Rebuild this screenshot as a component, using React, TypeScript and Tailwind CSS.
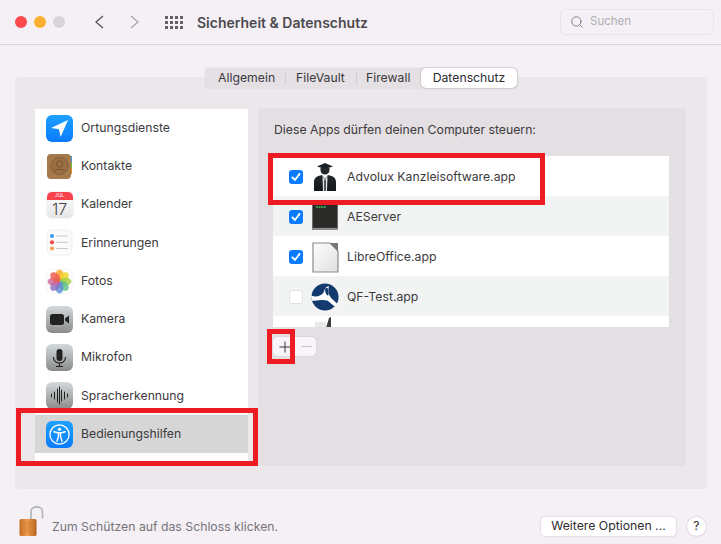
import React from "react";
import { Search } from "lucide-react";

const LocationIcon = () => (
  <svg width="27" height="27" viewBox="0 0 27 27">
    <defs>
      <linearGradient id="locBg" x1="0" y1="0" x2="0" y2="1">
        <stop offset="0" stopColor="#1ea1ff" />
        <stop offset="1" stopColor="#0a7cff" />
      </linearGradient>
    </defs>
    <rect width="27" height="27" rx="6" fill="url(#locBg)" />
    <path d="M22 5 L5 13 L13 14.2 L14.6 22 Z" fill="#fff" />
  </svg>
);

const ContactsIcon = () => (
  <svg width="27" height="27" viewBox="0 0 27 27">
    <rect x="23" y="3" width="3" height="6" fill="#4a9ad8" />
    <rect x="23" y="9" width="3" height="6" fill="#7ab648" />
    <rect x="23" y="15" width="3" height="6" fill="#e08a2c" />
    <rect x="1" y="1" width="24" height="25" rx="4" fill="#a5794b" />
    <circle cx="13.5" cy="13" r="8.6" fill="#9a6f43" stroke="#7f5a35" strokeWidth="0.8" />
    <circle cx="13.5" cy="11" r="3" fill="none" stroke="#75522f" strokeWidth="1" />
    <path d="M7.5 18.5 C9 15.6 18 15.6 19.5 18.5" fill="none" stroke="#75522f" strokeWidth="1" />
  </svg>
);

const CalendarIcon = () => (
  <div className="flex h-[26px] w-[26px] flex-col overflow-hidden rounded-[5px] bg-gradient-to-b from-white to-[#e6e6e6] shadow-[0_0_1px_rgba(0,0,0,0.4)]">
    <div className="flex h-[8px] items-center justify-center bg-[#f8434f] text-[5px] leading-none text-white">JUL</div>
    <div className="flex flex-1 items-center justify-center text-[16px] font-light leading-none text-[#444]">17</div>
  </div>
);

const RemindersIcon = () => (
  <svg width="27" height="27" viewBox="0 0 27 27">
    <rect x="1" y="1" width="25" height="25" rx="5" fill="#fbfbfb" stroke="#e4e4e4" strokeWidth="0.6" />
    <circle cx="6" cy="7" r="2.1" fill="#3d9cf0" />
    <circle cx="6" cy="13.3" r="2.1" fill="#ee4b4b" />
    <circle cx="6" cy="19.5" r="2.1" fill="#f0a254" />
    <path d="M10 7h12M10 13.3h12M10 19.5h12" stroke="#c9c9c9" strokeWidth="1" />
  </svg>
);

const PhotosIcon = () => {
  const petals = ["#f6a623", "#f5d327", "#a4cf3e", "#5cbf8a", "#5b8fd8", "#8e6cc0", "#d0679d", "#ee5a4a"];
  return (
    <svg width="27" height="27" viewBox="0 0 27 27">
      <rect x="1" y="1" width="25" height="25" rx="5" fill="#fdfdfd" stroke="#eeeeee" strokeWidth="0.6" />
      {petals.map((c, i) => (
        <ellipse
          key={c}
          cx="13.5"
          cy="7.6"
          rx="4"
          ry="6"
          fill={c}
          fillOpacity="0.82"
          transform={`rotate(${i * 45} 13.5 13.5)`}
        />
      ))}
    </svg>
  );
};

const GrayTile = ({ id, children }: { id: string; children: React.ReactNode }) => (
  <svg width="27" height="27" viewBox="0 0 27 27">
    <defs>
      <linearGradient id={id} x1="0" y1="0" x2="0" y2="1">
        <stop offset="0" stopColor="#d3dadc" />
        <stop offset="1" stopColor="#8b8b8b" />
      </linearGradient>
    </defs>
    <rect width="27" height="27" rx="6" fill={`url(#${id})`} />
    {children}
  </svg>
);

const CameraIcon = () => (
  <GrayTile id="camBg">
    <rect x="4" y="8" width="14" height="11" rx="2.5" fill="#222" />
    <path d="M19 12.5 L23 9.5 V17.5 L19 14.5 Z" fill="#222" />
  </GrayTile>
);

const MicIcon = () => (
  <GrayTile id="micBg">
    <rect x="10.5" y="5" width="6" height="12" rx="3" fill="#222" />
    <path d="M7.5 13 C7.5 21 19.5 21 19.5 13 M13.5 19 V22.5 M10 22.5 H17" fill="none" stroke="#222" strokeWidth="1.2" />
  </GrayTile>
);

const SpeechIcon = () => (
  <GrayTile id="speechBg">
    <path
      d="M5.5 12v3M8.5 10v7M11.5 7v13M13.5 5v17M15.5 8v11M18.5 10v7M21.5 12v3"
      stroke="#222"
      strokeWidth="1"
      strokeLinecap="round"
    />
  </GrayTile>
);

const AccessIcon = () => (
  <svg width="27" height="27" viewBox="0 0 27 27">
    <defs>
      <linearGradient id="accBg" x1="0" y1="0" x2="0" y2="1">
        <stop offset="0" stopColor="#1ea1ff" />
        <stop offset="1" stopColor="#0a7cff" />
      </linearGradient>
    </defs>
    <rect width="27" height="27" rx="6" fill="url(#accBg)" />
    <circle cx="13.5" cy="13.5" r="9.6" fill="none" stroke="#fff" strokeWidth="1.3" />
    <circle cx="13.5" cy="8.3" r="1.6" fill="#fff" />
    <path
      d="M7.8 10.8 L11.8 11.8 H15.2 L19.2 10.8 M12.5 12 V15.2 L11 20.2 M14.5 12 V15.2 L16 20.2"
      fill="none"
      stroke="#fff"
      strokeWidth="1.4"
      strokeLinecap="round"
    />
  </svg>
);

const AdvoluxIcon = () => (
  <svg width="26" height="30" viewBox="0 0 26 30">
    <defs>
      <linearGradient id="advBg" x1="0" y1="0" x2="0" y2="1">
        <stop offset="0" stopColor="#23272b" />
        <stop offset="1" stopColor="#14171a" />
      </linearGradient>
    </defs>
    <path d="M13 1 L21 4.5 L13 7 L5 4.5 Z" fill="#1d2226" />
    <path d="M8.5 6 H17.5 V8 C17.5 14 8.5 14 8.5 8 Z" fill="#23282c" />
    <path d="M2 29 V20 C2 15 6 14 10 13 L13 17 L16 13 C20 14 24 15 24 20 V29 Z" fill="url(#advBg)" />
    <path d="M10.5 14 L13 18 L15.5 14 L15 29 H11 Z" fill="#e6e8e8" />
    <path d="M12.2 18 H13.8 V29 H12.2 Z" fill="#2a2f33" />
  </svg>
);

const TerminalIcon = () => (
  <svg width="26" height="27" viewBox="0 0 26 27">
    <rect x="0.5" y="0" width="25" height="24" fill="#2a2a28" stroke="#555" strokeWidth="0.6" />
    <rect x="0" y="24" width="26" height="2" fill="#8c8c8c" />
    <path d="M4 3 H14" stroke="#3fbf5a" strokeWidth="1.4" strokeDasharray="2 0.6" />
  </svg>
);

const LibreIcon = () => (
  <svg width="27" height="31" viewBox="0 0 27 31">
    <defs>
      <linearGradient id="libreBg" x1="0" y1="0" x2="1" y2="1">
        <stop offset="0" stopColor="#fdfdfd" />
        <stop offset="1" stopColor="#e0e0e0" />
      </linearGradient>
    </defs>
    <path d="M1 1 H18 L26 9 V30 H1 Z" fill="url(#libreBg)" stroke="#8c8c8c" strokeWidth="1.2" />
    <path d="M18 1 L26 1 L26 9 Z" fill="#777" />
  </svg>
);

// navy disc, white wedge from the left edge up to the middle, tail to the lower right
const QfIcon = () => (
  <svg width="30" height="30" viewBox="0 0 30 30">
    <circle cx="15" cy="15" r="14.5" fill="#123a6e" />
    <path d="M0 13.5 C6 15.5 10 14 13 11 L15.5 5 L19 3 L18.5 11 L21.5 16 L29 23 L25 25 L18 19 C12 17 5 19 1 19 Z" fill="#fff" />
    <path d="M15.5 5 C14.5 9 15.5 12 18.5 14 L18.5 6 Z" fill="#123a6e" />
  </svg>
);

const PeekIcon = () => (
  <svg width="26" height="11" viewBox="0 0 26 11">
    <path d="M4 5 H15 V11 H4 Z" fill="#e9e9e9" />
    <path d="M18 1 L20 0 V11 H15 Z" fill="#3a3d40" />
  </svg>
);

const LockIcon = () => (
  <svg width="25" height="31" viewBox="0 0 25 31">
    <defs>
      <linearGradient id="lockBody" x1="0" y1="0" x2="1" y2="0">
        <stop offset="0" stopColor="#c26a22" />
        <stop offset="0.45" stopColor="#f2a053" />
        <stop offset="1" stopColor="#b4601e" />
      </linearGradient>
    </defs>
    <path d="M12 14 V6 C12 -0.8 23.5 -0.8 23.5 6 V12.5" fill="none" stroke="#aeb4ba" strokeWidth="1.6" />
    <rect x="0.5" y="13" width="17" height="17" rx="1.5" fill="url(#lockBody)" />
    <path d="M2 16h14M2 18h14M2 20h14M2 22h14M2 24h14M2 26h14" stroke="#cf7d33" strokeWidth="0.7" />
  </svg>
);

const Check = () => (
  <svg width="14" height="14" viewBox="0 0 14 14">
    <rect width="14" height="14" rx="3" fill="#0a7cff" />
    <path d="M3.4 7.4 L6 10 L10.6 3.9" fill="none" stroke="#fff" strokeWidth="1.8" strokeLinecap="round" strokeLinejoin="round" />
  </svg>
);

const services: { name: string; icon: React.ReactNode; selected?: boolean }[] = [
  { name: "Ortungsdienste", icon: <LocationIcon /> },
  { name: "Kontakte", icon: <ContactsIcon /> },
  { name: "Kalender", icon: <CalendarIcon /> },
  { name: "Erinnerungen", icon: <RemindersIcon /> },
  { name: "Fotos", icon: <PhotosIcon /> },
  { name: "Kamera", icon: <CameraIcon /> },
  { name: "Mikrofon", icon: <MicIcon /> },
  { name: "Spracherkennung", icon: <SpeechIcon /> },
  { name: "Bedienungshilfen", icon: <AccessIcon />, selected: true },
];

const apps: { name: string; checked: boolean; icon: React.ReactNode }[] = [
  { name: "Advolux Kanzleisoftware.app", checked: true, icon: <AdvoluxIcon /> },
  { name: "AEServer", checked: true, icon: <TerminalIcon /> },
  { name: "LibreOffice.app", checked: true, icon: <LibreIcon /> },
  { name: "QF-Test.app", checked: false, icon: <QfIcon /> },
];

export default function App() {
  return (
    <div className="flex h-[544px] w-[721px] flex-col overflow-hidden bg-[#f4f0f5] font-['Inter',sans-serif] text-[12.25px] text-[#3c3a3d]">
      {/* title bar */}
      <div className="flex h-[45px] shrink-0 items-center border-b border-[#dcd7dc] pl-[15px] pr-[7px]">
        <div className="flex gap-[7px]">
          <span className="h-3 w-3 rounded-full bg-[#fc4a4e]" />
          <span className="h-3 w-3 rounded-full bg-[#fdb132]" />
          <span className="h-3 w-3 rounded-full bg-[#d8d4da]" />
        </div>
        <svg width="10" height="14" viewBox="0 0 10 14" className="ml-[29px]">
          <path d="M9 1 L2 7 L9 13" fill="none" stroke="#57555a" strokeWidth="1.3" />
        </svg>
        <svg width="10" height="14" viewBox="0 0 10 14" className="ml-[26px]">
          <path d="M1 1 L8 7 L1 13" fill="none" stroke="#a8a5aa" strokeWidth="1.3" />
        </svg>
        <div className="ml-[25px] grid grid-cols-4 gap-x-[2px] gap-y-[2px]">
          {Array.from({ length: 12 }).map((_, i) => (
            <span key={i} className="h-[3px] w-[3px] bg-[#625f66]" />
          ))}
        </div>
        <div className="ml-[14px] text-[14px] font-semibold text-[#4c4a4e]">Sicherheit &amp; Datenschutz</div>
        <div className="ml-auto flex h-[26px] w-[154px] items-center rounded-[5px] border border-[#e9e4ea] pl-[9px] text-[#b0adb2]">
          <Search size={14} strokeWidth={1.5} className="text-[#77747a]" />
          <span className="ml-[6px] text-[11.5px]">Suchen</span>
        </div>
      </div>

      <div className="flex-1 px-[15px] pt-[32px]">
        {/* outer panel */}
        <div className="flow-root h-[412px] w-[692px] rounded-[5px] bg-[#ebe7eb]">
          <div className="-mt-[9px] flex justify-center">
            <div className="flex h-[20px] w-[312px] items-center rounded-[5px] bg-[#e4e0e4] shadow-[0_0_1px_rgba(0,0,0,0.25)]">
              <span className="w-[80px] pl-[13px]">Allgemein</span>
              <span className="h-[11px] w-px bg-[#cfcbcf]" />
              <span className="w-[70px] pl-[10px]">FileVault</span>
              <span className="h-[11px] w-px bg-[#cfcbcf]" />
              <span className="w-[64px] pl-[9px]">Firewall</span>
              <span className="flex h-[20px] w-[96px] items-center justify-center rounded-[5px] bg-white text-[#2e2c2f] shadow-[0_0_2px_rgba(0,0,0,0.35)]">
                Datenschutz
              </span>
            </div>
          </div>

          <div className="mt-[20px] flex gap-[10px] px-[20px]">
            {/* service list */}
            <div className="relative mt-[1px] h-[357px] w-[213px] bg-white">
              <div className="flex flex-col">
                {services.map((s) => (
                  <div
                    key={s.name}
                    className={`flex h-[38.25px] items-center pl-[11px] ${s.selected ? "bg-[#d6d6d6]" : ""}`}
                  >
                    <div className="flex w-[27px] justify-center">{s.icon}</div>
                    <span className="ml-[8px]">{s.name}</span>
                  </div>
                ))}
              </div>
              {/* annotation */}
              <div className="absolute -left-[19px] top-[299px] h-[58px] w-[242px] border-[5px] border-[#ed1c24]" />
            </div>

            {/* apps panel */}
            <div className="relative h-[358px] w-[428px] rounded-[4px] bg-[#e4dfe3] pl-[15px] pt-[14px]">
              <div className="ml-px leading-[15px] text-[#3c3a3d]">Diese Apps dürfen deinen Computer steuern:</div>
              <div className="mt-[19px] h-[171px] w-[396px] overflow-hidden bg-white">
                {apps.map((a, i) => (
                  <div
                    key={a.name}
                    className={`flex h-[40px] items-center pl-[16px] pt-[2px] ${i % 2 === 1 ? "bg-[#f2f4f3]" : "bg-white"}`}
                  >
                    {a.checked ? (
                      <Check />
                    ) : (
                      <span className="h-[14px] w-[14px] rounded-[3px] border border-[#e2e0e2] bg-white" />
                    )}
                    <div className="ml-[8px] flex w-[28px] justify-center">{a.icon}</div>
                    <span className="ml-[8px]">{a.name}</span>
                  </div>
                ))}
                <div className="pl-[38px] pt-[1px]">
                  <PeekIcon />
                </div>
              </div>
              <div className="mt-[10px] flex h-[19px] w-[43px] rounded-[4px] bg-[#f7f5f7] shadow-[0_0_1px_rgba(0,0,0,0.3)]">
                <span className="flex w-[23px] items-center justify-center">
                  <svg width="12" height="12" viewBox="0 0 12 12">
                    <path d="M6 0.5 V11.5 M0.5 6 H11.5" stroke="#3a383b" strokeWidth="1" />
                  </svg>
                </span>
                <span className="flex w-[20px] items-center justify-center">
                  <svg width="11" height="3" viewBox="0 0 11 3">
                    <path d="M0.5 1.5 H10.5" stroke="#c2bfc3" strokeWidth="1" />
                  </svg>
                </span>
              </div>
              {/* annotations */}
              <div className="absolute left-[10px] top-[45px] h-[52px] w-[277px] border-[5px] border-[#ed1c24]" />
              <div className="absolute left-[9px] top-[221px] h-[35px] w-[28px] border-[5px] border-[#ed1c24]" />
            </div>
          </div>
        </div>

        {/* footer */}
        <div className="flex h-[55px] items-center pl-[4px]">
          <div className="mt-[10px]">
            <LockIcon />
          </div>
          <span className="ml-[8px] mt-[22px] text-[#77747a]">Zum Schützen auf das Schloss klicken.</span>
          <button className="ml-auto mt-[20px] h-[19px] w-[135px] rounded-[4px] bg-white leading-none text-[#2e2c2f] shadow-[0_0_2px_rgba(0,0,0,0.25)]">
            Weitere Optionen ...
          </button>
          <button className="ml-[11px] mt-[20px] h-[19px] w-[19px] rounded-full bg-white leading-none text-[#2e2c2f] shadow-[0_0_2px_rgba(0,0,0,0.25)]">
            ?
          </button>
        </div>
      </div>
    </div>
  );
}
